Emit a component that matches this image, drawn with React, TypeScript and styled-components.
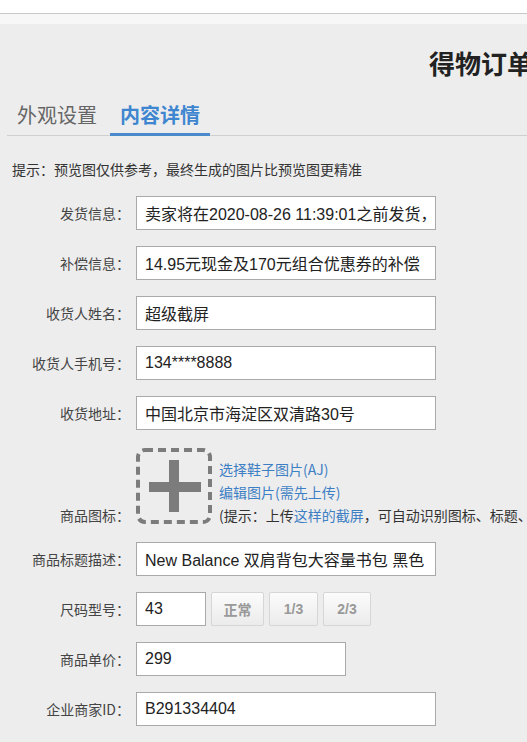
import styled, { createGlobalStyle } from "styled-components";

const GlobalStyle = createGlobalStyle`
  html, body {
    margin: 0;
    padding: 0;
    background: #ededed;
    overflow: hidden;
  }
  body {
    font-family: "Liberation Sans", "Noto Sans CJK SC", sans-serif;
    color: #333;
  }
`;

const TopBar = styled.div`
  height: 13px;
  background: #fff;
  border-bottom: 1px solid #c8c8c8;
`;

const SubBar = styled.div`
  height: 10px;
  background: #f7f7f7;
`;

const Main = styled.div`
  background: #ededed;
  min-height: 718px;
`;

const Title = styled.h1`
  margin: 0;
  padding: 24px 0 0 429px;
  font-family: "Noto Sans CJK SC", sans-serif;
  font-size: 26px;
  line-height: 30px;
  font-weight: 700;
  color: #222;
  white-space: nowrap;
`;

const Tabs = styled.div`
  display: flex;
  gap: 3px;
  margin: 24px 0 0 7px;
  border-bottom: 1px solid #cfcfcf;
`;

const Tab = styled.div<{ $active?: boolean }>`
  width: 100px;
  box-sizing: border-box;
  padding: 0 10px 5px;
  margin-bottom: -1px;
  font-family: "Noto Sans CJK SC", sans-serif;
  font-size: 20px;
  line-height: 26px;
  font-weight: ${(p) => (p.$active ? 700 : 400)};
  color: ${(p) => (p.$active ? "#3f86d0" : "#666")};
  border-bottom: 3px solid ${(p) => (p.$active ? "#4a89cb" : "transparent")};
`;

const Hint = styled.p`
  margin: 24px 0 0 12px;
  font-family: "Noto Sans CJK SC", sans-serif;
  font-size: 14px;
  line-height: 18px;
  color: #333;
`;

const Form = styled.div`
  display: flex;
  flex-direction: column;
  gap: 16px;
  margin-top: 18px;
`;

const Row = styled.div<{ $bottom?: boolean }>`
  display: flex;
  align-items: ${(p) => (p.$bottom ? "flex-end" : "center")};
  gap: 6px;
  margin: ${(p) => (p.$bottom ? "2px 0" : "0")};
`;

const Label = styled.label<{ $bottom?: boolean }>`
  flex: 0 0 130px;
  text-align: right;
  font-family: "Noto Sans CJK SC", sans-serif;
  font-size: 14px;
  line-height: 23px;
  color: #444;
  white-space: nowrap;
  margin-bottom: ${(p) => (p.$bottom ? "-3px" : "0")};
`;

const Input = styled.input<{ $w?: number }>`
  box-sizing: border-box;
  width: ${(p) => p.$w ?? 300}px;
  height: 34px;
  padding: 0 8px;
  border: 1px solid #a9a9a9;
  border-radius: 0;
  background: #fff;
  font-family: "Liberation Sans", "Noto Sans CJK SC", sans-serif;
  font-size: 16px;
  color: #222;
  outline: none;
`;

const SizeButton = styled.button<{ $w: number }>`
  box-sizing: border-box;
  width: ${(p) => p.$w}px;
  height: 34px;
  padding: 0;
  border: 1px solid #d6d6d6;
  border-radius: 2px;
  background: linear-gradient(#fbfbfb, #ebebeb);
  font-family: "Liberation Sans", "Noto Sans CJK SC", sans-serif;
  font-size: 14px;
  font-weight: 700;
  color: #999;
`;

const SizeGroup = styled.div`
  display: flex;
  align-items: center;
  gap: 5px;
`;

const UploadBox = styled.div`
  display: flex;
  align-items: flex-end;
  gap: 7px;
`;

const UploadText = styled.div`
  display: flex;
  flex-direction: column;
  margin-bottom: -3px;
  font-family: "Noto Sans CJK SC", sans-serif;
  font-size: 14px;
  line-height: 23px;
  color: #333;
  white-space: nowrap;
`;

const Link = styled.a`
  color: #3d7fc4;
  text-decoration: none;
`;

const PlusIcon = () => (
  <svg width="76" height="76" viewBox="0 0 76 76">
    <rect
      x="2"
      y="2"
      width="72"
      height="72"
      rx="7"
      fill="none"
      stroke="#7c7c7c"
      strokeWidth="4"
      strokeDasharray="8 5"
    />
    <rect x="13" y="34" width="52" height="10" fill="#7c7c7c" />
    <rect x="33" y="12" width="10" height="52" fill="#7c7c7c" />
  </svg>
);

const fields: [string, string][] = [
  ["发货信息：", "卖家将在2020-08-26 11:39:01之前发货，"],
  ["补偿信息：", "14.95元现金及170元组合优惠券的补偿"],
  ["收货人姓名：", "超级截屏"],
  ["收货人手机号：", "134****8888"],
  ["收货地址：", "中国北京市海淀区双清路30号"],
];

const sizes: [string, number][] = [
  ["正常", 53],
  ["1/3", 49],
  ["2/3", 48],
];

const App = () => {
  return (
    <>
      <GlobalStyle />
      <TopBar />
      <SubBar />
      <Main>
        <Title>得物订单</Title>
        <Tabs>
          <Tab>外观设置</Tab>
          <Tab $active>内容详情</Tab>
        </Tabs>
        <Hint>提示：预览图仅供参考，最终生成的图片比预览图更精准</Hint>
        <Form>
          {fields.map(([label, value]) => (
            <Row key={label}>
              <Label>{label}</Label>
              <Input readOnly defaultValue={value} />
            </Row>
          ))}
          <Row $bottom>
            <Label $bottom>商品图标：</Label>
            <UploadBox>
              <PlusIcon />
              <UploadText>
                <Link>选择鞋子图片(AJ)</Link>
                <Link>编辑图片(需先上传)</Link>
                <span>
                  (提示：上传<Link>这样的截屏</Link>，可自动识别图标、标题、价格)
                </span>
              </UploadText>
            </UploadBox>
          </Row>
          <Row>
            <Label>商品标题描述：</Label>
            <Input readOnly defaultValue="New Balance 双肩背包大容量书包 黑色" />
          </Row>
          <Row>
            <Label>尺码型号：</Label>
            <SizeGroup>
              <Input readOnly defaultValue="43" $w={70} />
              {sizes.map(([text, w]) => (
                <SizeButton key={text} $w={w}>
                  {text}
                </SizeButton>
              ))}
            </SizeGroup>
          </Row>
          <Row>
            <Label>商品单价：</Label>
            <Input readOnly defaultValue="299" $w={210} />
          </Row>
          <Row>
            <Label>企业商家ID：</Label>
            <Input readOnly defaultValue="B291334404" />
          </Row>
        </Form>
      </Main>
    </>
  );
};

export default App;
